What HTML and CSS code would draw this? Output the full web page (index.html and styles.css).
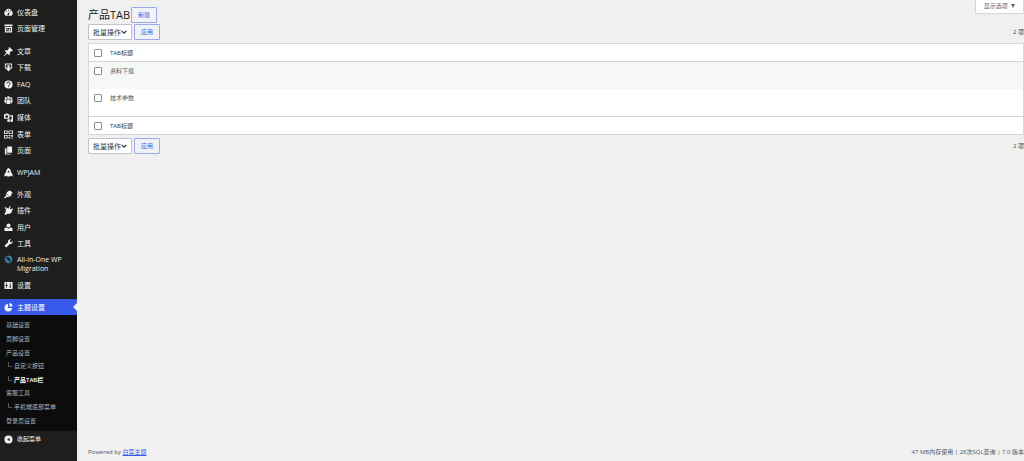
FILE: index.html
```html
<!DOCTYPE html>
<html lang="zh-CN">
<head>
    <meta charset="UTF-8">
    <meta name="viewport" content="width=device-width, initial-scale=1.0">
    <title>产品TAB</title>
    <link rel="stylesheet" href="styles.css">
</head>
<body>
    <nav class="sidebar">
        <ul class="menu two">
            <li><a href="#"><svg viewBox="0 0 20 20"><path fill-rule="evenodd" d="M3 17a9 9 0 1 1 14 0zM9 4v2h2V4zM4.500 6v2h2V6zM13.500 6v2h2V6zM12.500 8l-3.500 4a2 2 0 1 0 2.500 1.500z"/></svg>仪表盘</a></li>
            <li><a href="#"><svg viewBox="0 0 20 20"><path fill-rule="evenodd" d="M1 1h18v4H1zM2 6.500h16V19H2zM5 9v7h10V9zM6.500 10.500h3v2h-3zM11 10.500h2.500V15H8v-1h3z"/></svg>页面管理</a></li>
        </ul>
        <ul class="menu seven">
            <li><a href="#"><svg viewBox="0 0 20 20"><path d="M12 0l8 8-1.500 1.500-2-.5-4 4 .5 4-1.500 1.500-4-4L1 20l-1-1 5.500-6.500-4-4L3 7l4 .5 4-4-.5-2z"/></svg>文章</a></li>
            <li><a href="#"><svg viewBox="0 0 20 20"><path d="M2 1h16v11h-4v-2h2V3.500H4V10h2v2H2zM7.500 5h5v7h3.500l-6 7-6-7h3.500z"/></svg>下载</a></li>
            <li><a href="#"><svg viewBox="0 0 20 20"><circle cx="10" cy="10" r="9"/><path class="cut" d="M6.500 8a3.500 3.500 0 1 1 5 3l-1.500 1.500"/><path class="cut" d="M10 14v2"/></svg>FAQ</a></li>
            <li><a href="#"><svg viewBox="0 0 20 20"><circle cx="4" cy="5" r="2.500"/><circle cx="10" cy="3.500" r="3"/><circle cx="16" cy="5" r="2.500"/><path d="M1 8h4v8H3l-2-3zM6 7.500h8V18H6zM15 8h4v5l-2 3h-2z"/></svg>团队</a></li>
            <li><a href="#"><svg viewBox="0 0 20 20"><path fill-rule="evenodd" d="M0 3h3l1-2h4l1 2h3v10H0zM6 5a3 3 0 1 0 0 6 3 3 0 0 0 0-6zM13 5h7v12a3 3 0 1 1-3-3V8h-4zM10 14h3v3a3 3 0 1 1-3-3z"/></svg>媒体</a></li>
            <li><a href="#"><svg viewBox="0 0 20 20"><path fill-rule="evenodd" d="M0 1h8v8H0zM2 3v4h4V3zM10 1h10v8H10zM12 3v4h6V3zM0 11h8v8H0zM2 13v4h4v-4zM10 11h4v3h-4zM16 11h4v4h-4zM10 16h4v3h-4zM16 17h4v2h-4z"/></svg>表单</a></li>
            <li><a href="#"><svg viewBox="0 0 20 20"><path d="M7 1h11v14H7zM2 5h3.500v12H15v2H2z"/></svg>页面</a></li>
        </ul>
        <ul class="menu one">
            <li><a href="#"><svg viewBox="0 0 20 20"><path fill-rule="evenodd" d="M10 0c4 2 6 6 6 10l3 4v5l-5-2-1 2H7l-1-2-5 2v-5l3-4c0-4 2-8 6-10zM10 6a2 2 0 1 0 0 4 2 2 0 0 0 0-4z"/></svg>WPJAM</a></li>
        </ul>
        <ul class="menu four">
            <li><a href="#"><svg viewBox="0 0 20 20"><path d="M9 3l5-2 6 6-4 1 1 3-4 4-8-8zM4 8l8 7-3 1-2-1-5 4-2-2 5-5z"/></svg>外观</a></li>
            <li><a href="#"><svg viewBox="0 0 20 20"><path d="M13 0l2 1-2 5 2 2 4-3 1 2-3 4 1 1c-2 5-6 6-10 5l-5 3-2-2 3-5C3 9 5 5 8 4l2 2zM2 3h3v3H2z"/></svg>插件</a></li>
            <li><a href="#"><svg viewBox="0 0 20 20"><circle cx="10" cy="5.500" r="4.500"/><path d="M1 18v-5c0-2 3-3 5-3l4 3 4-3c2 0 5 1 5 3v5z"/></svg>用户</a></li>
            <li><a href="#"><svg viewBox="0 0 20 20"><path d="M16 1l-3 3 .5 2.500L16 7l3-3c1 5-2 8-6 7l-8 8-4-4 8-8c-1-4 3-7 7-6z"/></svg>工具</a></li>
        </ul>
        <ul class="menu extra">
            <li class="long"><a href="#"><svg viewBox="0 0 20 20"><circle class="ring" cx="10" cy="10" r="8"/><path class="swirl" d="M8 3c6 0 9 5 7 10M6 7c-2 5 2 9 7 7"/></svg><span>All-in-One WP Migration</span></a></li>
            <li class="single"><a href="#"><svg viewBox="0 0 20 20"><path fill-rule="evenodd" d="M1 2h18v16H1zM5 4v5H3.500v2H5v5h1.500v-5H8V9H6.500V4zM13 4v8h-1.500v2H13v2h1.500v-2H16v-2h-1.500V4z"/></svg>设置</a></li>
        </ul>
        <ul class="menu theme">
            <li class="single current"><a href="#"><svg viewBox="0 0 20 20"><path d="M9 2v9h9a8.500 8.500 0 1 1-9-9zM12 0a8 8 0 0 1 7 8h-7z"/></svg>主题设置</a></li>
        </ul>
        <ul class="submenu">
            <li><a href="#">基础设置</a></li>
            <li><a href="#">页脚设置</a></li>
            <li><a href="#">产品设置</a></li>
            <li class="child"><a href="#">自定义按钮</a></li>
            <li class="child active"><a href="#">产品TAB栏</a></li>
            <li><a href="#">客服工具</a></li>
            <li class="child"><a href="#">手机端底部菜单</a></li>
            <li><a href="#">登录页设置</a></li>
        </ul>
        <button type="button" class="collapse"><svg viewBox="0 0 20 20"><path fill-rule="evenodd" d="M10 1a9 9 0 1 0 0 18 9 9 0 0 0 0-18zM12.500 6v8L7 10z"/></svg>收起菜单</button>
    </nav>

    <div class="content">
        <button type="button" class="screen-options">显示选项 <span class="arrow"></span></button>
        <main>
            <header class="heading">
                <h1>产品TAB</h1>
                <a href="#" class="button">新建</a>
            </header>
            <div class="tablenav">
                <select aria-label="批量操作">
                    <option>批量操作</option>
                </select>
                <button type="button" class="button">应用</button>
                <span class="count">2 项</span>
            </div>
            <table>
                <thead>
                    <tr>
                        <td class="check"><input type="checkbox" aria-label="全选"></td>
                        <th>TAB标题</th>
                    </tr>
                </thead>
                <tbody>
                    <tr>
                        <td class="check"><input type="checkbox" id="item1"></td>
                        <td><label for="item1">资料下载</label></td>
                    </tr>
                    <tr>
                        <td class="check"><input type="checkbox" id="item2"></td>
                        <td><label for="item2">技术参数</label></td>
                    </tr>
                </tbody>
                <tfoot>
                    <tr>
                        <td class="check"><input type="checkbox" aria-label="全选"></td>
                        <th>TAB标题</th>
                    </tr>
                </tfoot>
            </table>
            <div class="tablenav">
                <select aria-label="批量操作">
                    <option>批量操作</option>
                </select>
                <button type="button" class="button">应用</button>
                <span class="count">2 项</span>
            </div>
        </main>
        <footer>
            <span>Powered by <a href="#">白菜主题</a></span>
            <span>47 MB内存使用 | 28次SQL查询 | 7.0 版本</span>
        </footer>
    </div>
</body>
</html>
```
FILE: styles.css
```css
* {
    margin: 0;
    padding: 0;
    box-sizing: border-box;
}

body {
    font-family: "Open Sans", "Noto Sans CJK SC", sans-serif;
    font-size: 7px;
    line-height: 9px;
    color: #3c434a;
    background: #f0f0f0;
    display: flex;
    min-height: 100vh;
}

a {
    color: #3858e9;
}

ul {
    list-style: none;
}

button,
select {
    font: inherit;
}

/* Sidebar */
.sidebar {
    width: 77px;
    flex: none;
    background: #1e1e1e;
    padding-top: 4px;
}

.menu {
    display: grid;
    margin-bottom: 6px;
}

/* Rows share the height of their group */
.menu.two {
    height: 33px;
}

.menu.seven {
    height: 116px;
    margin-bottom: 5px;
}

.menu.one {
    height: 16px;
}

.menu.four {
    height: 66px;
    margin-bottom: 0;
}

.menu.theme {
    margin-bottom: 0;
}

.menu li {
    display: flex;
}

.menu a {
    display: flex;
    align-items: center;
    gap: 4px;
    flex: 1;
    padding-left: 4px;
    color: #f0f0f1;
    text-decoration: none;
}

.sidebar svg {
    width: 9px;
    height: 9px;
    flex: none;
    fill: #f0f0f1;
}

.sidebar .cut {
    fill: none;
    stroke: #1e1e1e;
    stroke-width: 2;
}

.sidebar .ring {
    fill: none;
    stroke: #5a6a78;
    stroke-width: 2;
}

.sidebar .swirl {
    fill: none;
    stroke: #2d9fd8;
    stroke-width: 3;
}

.menu .single {
    height: 16px;
}

.menu .long {
    height: 25px;
}

.menu .long a {
    align-items: flex-start;
    padding-top: 3px;
}

.menu .current {
    position: relative;
    background: #3858e9;
}

.menu .current a {
    color: #fff;
}

.menu .current::after {
    content: "";
    position: absolute;
    right: 0;
    top: 4px;
    border: 4px solid transparent;
    border-left: none;
    border-right-color: #f0f0f0;
}

.submenu {
    display: grid;
    grid-auto-rows: 1fr;
    align-items: center;
    height: 116px;
    padding: 4px 0 3px 6px;
    background: #0c0c0c;
    font-size: 6px;
    white-space: nowrap;
}

.submenu a {
    color: #b4b4b4;
    text-decoration: none;
}

.submenu .child::before {
    content: "";
    display: inline-block;
    width: 3px;
    height: 4px;
    margin: 0 2px 1px;
    border: solid #555;
    border-width: 0 0 1px 1px;
}

.submenu .active a {
    color: #fff;
    font-weight: 600;
}

.collapse {
    display: flex;
    align-items: center;
    gap: 4px;
    height: 16px;
    padding-left: 4px;
    border: none;
    background: none;
    color: #f0f0f1;
    font-size: 6px;
}

/* Content */
.content {
    flex: 1;
    display: flex;
    flex-direction: column;
    position: relative;
    padding-left: 11px;
}

.screen-options {
    position: absolute;
    top: 0;
    right: 0;
    width: 49px;
    height: 14px;
    border: 1px solid #d5d6d8;
    border-top: none;
    border-radius: 0 0 2px 2px;
    background: #fff;
    color: #646970;
    font-size: 6px;
}

.arrow {
    display: inline-block;
    margin-left: 2px;
    border: 2px solid transparent;
    border-top: 4px solid #646970;
    border-bottom: none;
}

main {
    flex: 1;
}

.heading {
    display: flex;
    align-items: center;
    gap: 1px;
    padding-top: 7px;
}

h1 {
    font-size: 11px;
    line-height: 16px;
    font-weight: 400;
    color: #1d2327;
}

.button {
    width: 26px;
    height: 16px;
    border: 1px solid #9ba9f0;
    border-radius: 1px;
    background: #f1f2f6;
    color: #3858e9;
    font-size: 6px;
    line-height: 14px;
    text-align: center;
    text-decoration: none;
}

.tablenav {
    display: flex;
    align-items: center;
    gap: 2px;
    padding: 1px 0 3px;
}

table + .tablenav {
    padding-top: 3px;
}

select {
    appearance: none;
    width: 44px;
    height: 16px;
    padding-left: 4px;
    border: 1px solid #c3c4c7;
    border-radius: 1px;
    color: #2c3338;
    background: #fff url("data:image/svg+xml,%3Csvg xmlns='http://www.w3.org/2000/svg' viewBox='0 0 20 20'%3E%3Cpath d='M2 6l8 8 8-8' fill='none' stroke='%23333' stroke-width='4'/%3E%3C/svg%3E") no-repeat right 4px center / 6px 6px;
}

.count {
    margin-left: auto;
    font-size: 6px;
}

table {
    width: 100%;
    border: 1px solid #d5d6d8;
    border-collapse: separate;
    border-spacing: 0;
    background: #fff;
}

td,
th {
    padding: 5px 7px 0;
    font-size: 6px;
    font-weight: 400;
    line-height: 8px;
    text-align: left;
    vertical-align: top;
}

thead tr,
tfoot tr {
    height: 18px;
    color: #2c3338;
}

tbody tr {
    height: 27px;
    color: #50575e;
}

tbody tr:first-child {
    background: #f6f7f7;
}

thead td,
thead th {
    border-bottom: 1px solid #d5d6d8;
}

tfoot td,
tfoot th {
    border-top: 1px solid #d5d6d8;
}

.check {
    width: 14px;
    padding: 5px 0 0 5px;
}

input {
    display: block;
    appearance: none;
    width: 8px;
    height: 8px;
    border: 1px solid #8c8f94;
    border-radius: 1px;
    background: #fff;
}

footer {
    display: flex;
    justify-content: space-between;
    padding-bottom: 4px;
    font-size: 6px;
    color: #50575e;
}
```
